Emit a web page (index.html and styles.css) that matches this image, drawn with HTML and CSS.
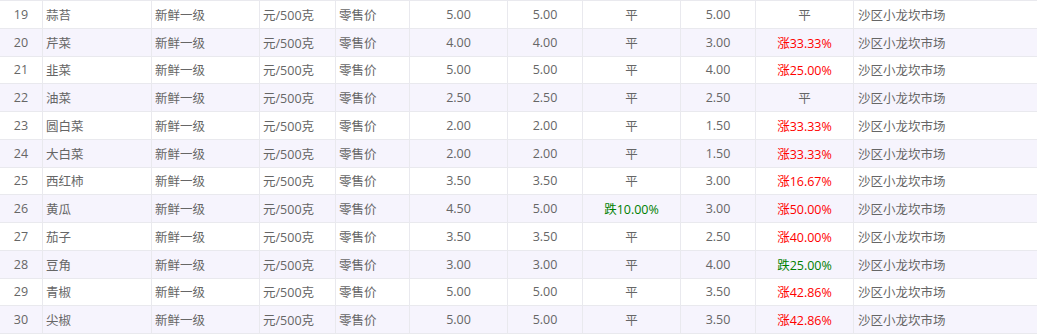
FILE: index.html
```html
<!DOCTYPE html>
<html lang="zh-CN">
<head>
<meta charset="utf-8">
<title>价格表</title>
<link rel="stylesheet" href="styles.css">
</head>
<body>
<table class="price-table">
  <colgroup>
    <col class="c-no"><col class="c-name"><col class="c-grade"><col class="c-unit"><col class="c-type">
    <col class="c-num"><col class="c-num2"><col class="c-chg"><col class="c-num3"><col class="c-chg"><col class="c-market">
  </colgroup>
  <tbody>
    <tr><td class="no">19</td><td>蒜苔</td><td>新鲜一级</td><td>元/500克</td><td>零售价</td><td class="num">5.00</td><td class="num">5.00</td><td class="num">平</td><td class="num">5.00</td><td class="num">平</td><td class="mkt">沙区小龙坎市场</td></tr>
    <tr><td class="no">20</td><td>芹菜</td><td>新鲜一级</td><td>元/500克</td><td>零售价</td><td class="num">4.00</td><td class="num">4.00</td><td class="num">平</td><td class="num">3.00</td><td class="num up">涨33.33%</td><td class="mkt">沙区小龙坎市场</td></tr>
    <tr><td class="no">21</td><td>韭菜</td><td>新鲜一级</td><td>元/500克</td><td>零售价</td><td class="num">5.00</td><td class="num">5.00</td><td class="num">平</td><td class="num">4.00</td><td class="num up">涨25.00%</td><td class="mkt">沙区小龙坎市场</td></tr>
    <tr><td class="no">22</td><td>油菜</td><td>新鲜一级</td><td>元/500克</td><td>零售价</td><td class="num">2.50</td><td class="num">2.50</td><td class="num">平</td><td class="num">2.50</td><td class="num">平</td><td class="mkt">沙区小龙坎市场</td></tr>
    <tr><td class="no">23</td><td>圆白菜</td><td>新鲜一级</td><td>元/500克</td><td>零售价</td><td class="num">2.00</td><td class="num">2.00</td><td class="num">平</td><td class="num">1.50</td><td class="num up">涨33.33%</td><td class="mkt">沙区小龙坎市场</td></tr>
    <tr><td class="no">24</td><td>大白菜</td><td>新鲜一级</td><td>元/500克</td><td>零售价</td><td class="num">2.00</td><td class="num">2.00</td><td class="num">平</td><td class="num">1.50</td><td class="num up">涨33.33%</td><td class="mkt">沙区小龙坎市场</td></tr>
    <tr><td class="no">25</td><td>西红柿</td><td>新鲜一级</td><td>元/500克</td><td>零售价</td><td class="num">3.50</td><td class="num">3.50</td><td class="num">平</td><td class="num">3.00</td><td class="num up">涨16.67%</td><td class="mkt">沙区小龙坎市场</td></tr>
    <tr><td class="no">26</td><td>黄瓜</td><td>新鲜一级</td><td>元/500克</td><td>零售价</td><td class="num">4.50</td><td class="num">5.00</td><td class="num down">跌10.00%</td><td class="num">3.00</td><td class="num up">涨50.00%</td><td class="mkt">沙区小龙坎市场</td></tr>
    <tr><td class="no">27</td><td>茄子</td><td>新鲜一级</td><td>元/500克</td><td>零售价</td><td class="num">3.50</td><td class="num">3.50</td><td class="num">平</td><td class="num">2.50</td><td class="num up">涨40.00%</td><td class="mkt">沙区小龙坎市场</td></tr>
    <tr><td class="no">28</td><td>豆角</td><td>新鲜一级</td><td>元/500克</td><td>零售价</td><td class="num">3.00</td><td class="num">3.00</td><td class="num">平</td><td class="num">4.00</td><td class="num down">跌25.00%</td><td class="mkt">沙区小龙坎市场</td></tr>
    <tr><td class="no">29</td><td>青椒</td><td>新鲜一级</td><td>元/500克</td><td>零售价</td><td class="num">5.00</td><td class="num">5.00</td><td class="num">平</td><td class="num">3.50</td><td class="num up">涨42.86%</td><td class="mkt">沙区小龙坎市场</td></tr>
    <tr><td class="no">30</td><td>尖椒</td><td>新鲜一级</td><td>元/500克</td><td>零售价</td><td class="num">5.00</td><td class="num">5.00</td><td class="num">平</td><td class="num">3.50</td><td class="num up">涨42.86%</td><td class="mkt">沙区小龙坎市场</td></tr>
  </tbody>
</table>
</body>
</html>
```

FILE: styles.css
```css
html, body {
  margin: 0;
  padding: 0;
  background: #ffffff;
  overflow: hidden;
}

.price-table {
  border-collapse: separate;
  border-spacing: 0;
  table-layout: fixed;
  width: 1037px;
  border-top: 1px solid #e9e9ee;
  font-family: "Open Sans", "Noto Sans CJK SC", sans-serif;
  font-size: 12.5px;
  color: #666666;
}

.c-no { width: 43px; }
.c-name { width: 109px; }
.c-grade { width: 108px; }
.c-unit { width: 76px; }
.c-type { width: 74px; }
.c-num { width: 98px; }
.c-num2 { width: 75px; }
.c-chg { width: 98px; }
.c-num3 { width: 75px; }
.c-market { width: 183px; }

.price-table td {
  height: 27.75px;
  padding: 0 0 0 3px;
  border-right: 1px solid #e9e9ee;
  border-bottom: 1px solid #e9e9ee;
  white-space: nowrap;
  vertical-align: middle;
  box-sizing: border-box;
}

.price-table tr:nth-child(even) td {
  background: #f6f4fd;
}

.price-table td.no,
.price-table td.num {
  text-align: center;
  padding: 0;
}

.price-table td.mkt {
  padding-left: 4px;
  border-right: none;
}

.up { color: #ff0000; }
.down { color: #008000; }
```
